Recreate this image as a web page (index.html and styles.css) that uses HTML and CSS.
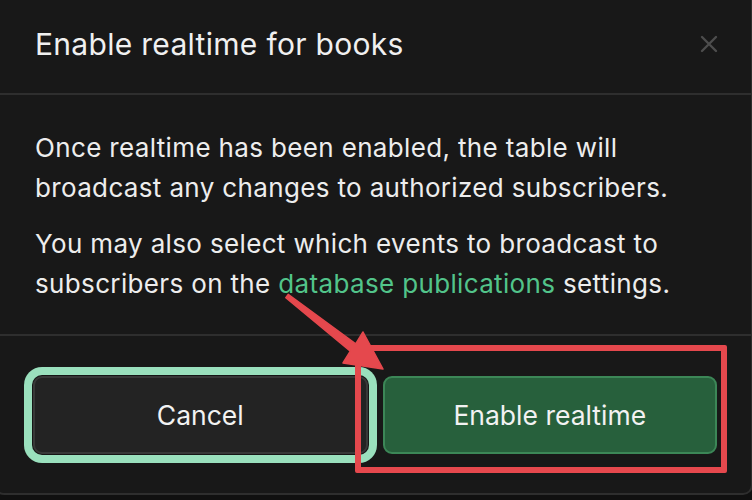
FILE: index.html
```html
<!DOCTYPE html>
<html>
<head>
<meta charset="utf-8">
<link rel="stylesheet" href="styles.css">
</head>
<body>
<div class="stage">
  <div class="modal">
    <div class="modal-header">
      <h2 class="title">Enable realtime for books</h2>
      <button class="close" aria-label="Close">
        <svg width="20" height="20" viewBox="0 0 20 20"><path d="M3 3L17 17M17 3L3 17" stroke="#4d4d4d" stroke-width="2.4" stroke-linecap="round"/></svg>
      </button>
    </div>
    <div class="modal-body">
      <p>Once realtime has been enabled, the table will<br>broadcast any changes to authorized subscribers.</p>
      <p>You may also select which events to broadcast to<br>subscribers on the <a class="link">database publications</a> settings.</p>
    </div>
    <div class="modal-footer">
      <button class="btn btn-cancel">Cancel</button>
      <button class="btn btn-primary">Enable realtime</button>
    </div>
  </div>
  <div class="highlight"></div>
  <svg class="arrow" width="752" height="500" viewBox="0 0 752 500">
    <polygon points="288.2,304.4 355.7,353.9 363,342 383,379 343,373 350.3,361.1 285.8,307.6" fill="#e5484d" stroke="#e5484d" stroke-width="1.5" stroke-linejoin="round"/>
  </svg>
</div>
</body>
</html>
```
FILE: styles.css
```css
* { box-sizing: border-box; }
html, body { margin: 0; padding: 0; background: #101010; }
body { width: 752px; height: 500px; overflow: hidden; font-family: "Inter", "Noto Sans", sans-serif; color: #ededed; }
.stage { position: relative; width: 752px; height: 500px; }
.modal {
  margin: -10px 0 0 -6px;
  width: 759px;
  height: 505px;
  background: #181818;
  border: 2px solid #2e2e2e;
  border-radius: 10px;
  display: flex;
  flex-direction: column;
}
.modal-header {
  height: 103px;
  padding: 0 32px 0 39px;
  border-bottom: 2px solid #2e2e2e;
  display: flex;
  align-items: center;
  justify-content: space-between;
  flex-shrink: 0;
}
.title { margin: 2px 0 0; font-size: 30px; font-weight: 400; letter-spacing: 0.3px; color: #f0f0f0; }
.close { background: none; border: none; padding: 0; display: flex; margin-top: 2px; }
.modal-body { padding: 33px 10px 22px 39px; height: 241px; border-bottom: 2px solid #2e2e2e; flex-shrink: 0; }
.modal-body p { margin: 0 0 16px; font-size: 26px; line-height: 40px; letter-spacing: 0.35px; white-space: nowrap; }
.link { color: #52c48a; }
.modal-footer { display: flex; gap: 15px; padding: 40px 34px 39px 37px; }
.btn {
  flex: 1;
  height: 78px;
  border-radius: 9px;
  font-family: inherit;
  font-size: 26.5px;
  color: #f2f2f2;
}
.btn-cancel { background: #232323; border: 2px solid #383838; box-shadow: 0 0 0 1px #151515, 0 0 0 9px #9ae0bd; }
.btn-primary { background: #27603c; border: 2px solid #3c8757; }
.highlight {
  position: absolute;
  left: 355px; top: 355px;
  width: 372px; height: 128px;
  border: 6px solid #e5484d;
  border-radius: 2px;
}
.arrow { position: absolute; left: 0; top: 0; pointer-events: none; }
```
